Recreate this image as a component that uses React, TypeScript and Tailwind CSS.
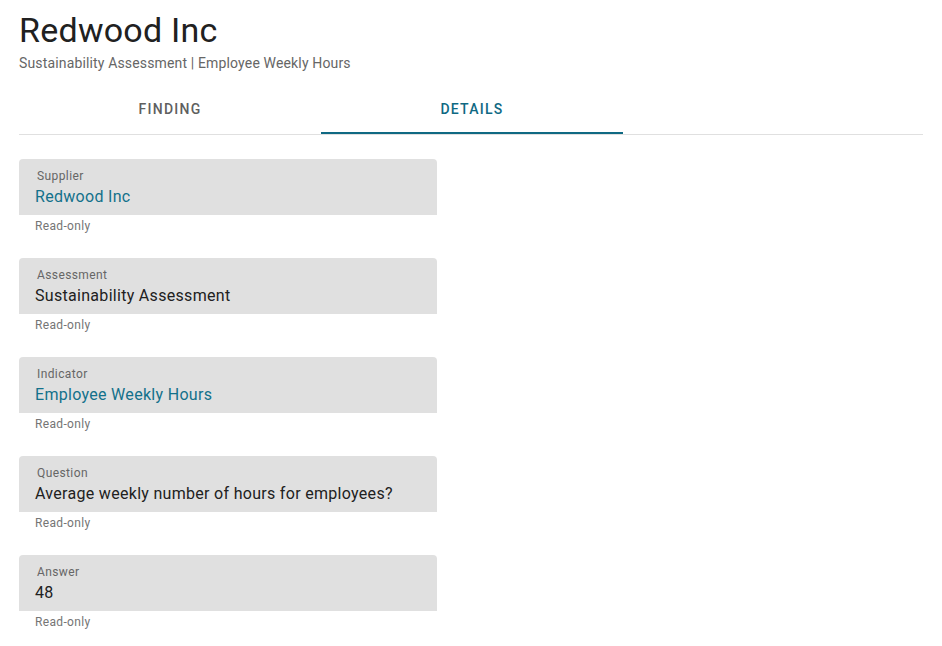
import { useState } from "react";

interface Field {
  label: string;
  value: string;
  link?: boolean;
}

const fields: Field[] = [
  { label: "Supplier", value: "Redwood Inc", link: true },
  { label: "Assessment", value: "Sustainability Assessment" },
  { label: "Indicator", value: "Employee Weekly Hours", link: true },
  { label: "Question", value: "Average weekly number of hours for employees?" },
  { label: "Answer", value: "48" },
];

function ReadOnlyField({ field }: { field: Field }) {
  return (
    <div className="flex flex-col">
      <div className="w-[418px] h-[56px] rounded-t-[4px] bg-[#e0e0e0] pl-[16px] pt-[9px] flex flex-col">
        <span className="pl-[2px] text-[12px] leading-[16px] tracking-[0.4px] text-[#666666]">
          {field.label}
        </span>
        <span
          className={
            "mt-[1px] text-[16px] leading-[24px] tracking-[0.3px] " +
            (field.link ? "text-[#13718b]" : "text-[#212121]")
          }
        >
          {field.value}
        </span>
      </div>
      <span className="mt-[3px] pl-[16px] text-[12px] leading-[16px] tracking-[0.35px] text-[#757575]">
        Read-only
      </span>
    </div>
  );
}

export default function App() {
  const [tab, setTab] = useState("details");

  return (
    <div className="min-h-screen bg-white px-[19px] pt-[10px] font-['Roboto',sans-serif] w-[942px]">
      <h1 className="text-[34px] leading-[40px] tracking-[0.25px] text-[#212121]">Redwood Inc</h1>
      <p className="mt-[3px] text-[14px] leading-[20px] tracking-[0.15px] text-[#666666]">
        Sustainability Assessment | Employee Weekly Hours
      </p>

      <div className="mt-[13px] flex border-b border-[#e0e0e0] w-[904px]">
        {[
          { id: "finding", label: "FINDING" },
          { id: "details", label: "DETAILS" },
        ].map((t) => (
          <button
            key={t.id}
            onClick={() => setTab(t.id)}
            className={
              "relative w-[302px] h-[48px] pb-[2px] flex items-center justify-center text-[14px] font-medium tracking-[1.25px] " +
              (tab === t.id ? "text-[#0f6983]" : "text-[#5f5f5f]")
            }
          >
            {t.label}
            {tab === t.id && (
              <span className="absolute left-0 right-0 bottom-0 h-[2px] bg-[#0f6983]" />
            )}
          </button>
        ))}
      </div>

      <div className="mt-[24px] flex flex-col gap-[24px]">
        {fields.map((f) => (
          <ReadOnlyField key={f.label} field={f} />
        ))}
      </div>
    </div>
  );
}
